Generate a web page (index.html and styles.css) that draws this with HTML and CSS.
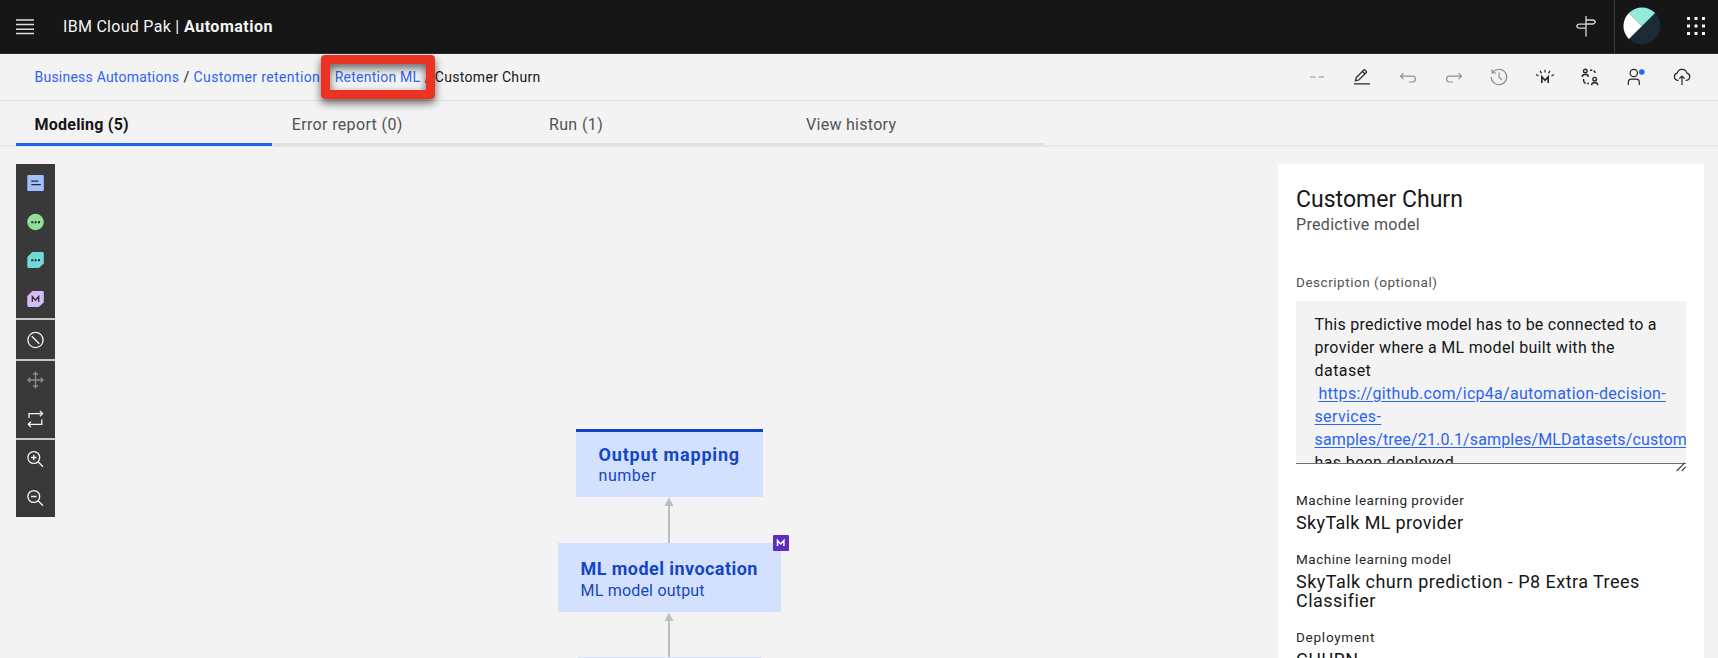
FILE: index.html
```html
<!DOCTYPE html>
<html lang="en">
<head>
<meta charset="utf-8">
<title>Customer Churn</title>
<link rel="stylesheet" href="styles.css">
</head>
<body>
<div class="app">
  <header class="header">
    <svg class="menu-icon" width="18" height="16" viewBox="0 0 18 16"><path d="M0 1h18M0 5.600h18M0 10.200h18M0 14.600h18" stroke="#e0e0e0" stroke-width="1.500"/></svg>
    <div class="brand"><span class="brand-name">IBM Cloud Pak |</span><b class="brand-product">Automation</b></div>
    <div class="header-actions">
      <svg class="sign-icon" width="22" height="24" viewBox="0 0 22 24" fill="none" stroke="#d8d8d8" stroke-width="1.300"><path d="M11 2v20.500M11 6h6.800q1.700 0 2.500 2-.8 2-2.500 2H11M11 10.200H4.200q-1.700 0-2.500 2 .8 2 2.500 2H11"/></svg>
      <span class="divider"></span>
      <svg class="avatar" width="38" height="38" viewBox="0 0 38 38"><circle cx="19" cy="19" r="18.500" fill="#1c2a35"/><path d="M19 19L5.900 5.900A18.500 18.500 0 0 1 32.100 5.900Z" fill="#92ebd9"/><path d="M19 19L5.900 5.900A18.500 18.500 0 0 0 5.900 32.100Z" fill="#fff"/></svg>
      <svg class="grid-icon" width="18" height="18" viewBox="0 0 18 18" fill="#f4f4f4"><path d="M0 0h3v3H0zM7.500 0h3v3h-3zM15 0h3v3h-3zM0 7.500h3v3H0zM7.500 7.500h3v3h-3zM15 7.500h3v3h-3zM0 15h3v3H0zM7.500 15h3v3h-3zM15 15h3v3h-3z"/></svg>
    </div>
  </header>

  <div class="crumb-bar">
    <nav class="crumbs">
      <a class="crumb-a">Business Automations</a><span class="slash">/</span><a class="crumb-b">Customer retention</a><span class="slash">/</span><a class="crumb-c crumb-marked">Retention ML<i class="marker"></i></a><span class="slash">/</span><span class="crumb-d">Customer Churn</span>
    </nav>
    <div class="tools">
      <svg class="dim" viewBox="0 0 18 18"><path d="M2 9h5.500M10.500 9H16"/></svg>
      <svg viewBox="0 0 18 18"><path d="M1 15.800h16M2.500 12.700l.8-3.200 7.500-7.500q.6-.6 1.200 0l1.300 1.300q.6.600 0 1.200L5.800 12zM9.500 3.500l2.500 2.500"/></svg>
      <svg class="dim" viewBox="0 0 18 18"><path d="M4.500 5.200L1.500 8.200l3 3M1.500 8.200h12a2.900 2.900 0 0 1 0 5.800H10"/></svg>
      <svg class="dim" viewBox="0 0 18 18"><path d="M13.500 5.200l3 3-3 3M16.500 8.200h-12a2.900 2.900 0 0 0 0 5.800H8"/></svg>
      <svg class="dim" viewBox="0 0 18 18"><path d="M1.300 9A7.700 7.700 0 1 0 3.400 3.700L2.200 5M2.200 1.200V5H6M9 4.500V9l3 3"/></svg>
      <svg viewBox="0 0 18 18"><path class="heavy" d="M5.800 15V8.700L9 12.200l3.200-3.500V15"/><path d="M9 1.800v2.700M4 2.800l1.500 2.600M14 2.800l-1.500 2.600M0 6.500l2.500 1.500M18 6.500l-2.500 1.500"/></svg>
      <svg class="people" viewBox="0 0 18 18"><circle cx="4.300" cy="3" r="1.800"/><path d="M1.300 9V8.700q0-2.200 2.200-2.200h1.600q2.200 0 2.200 2.200V9"/><circle cx="13.700" cy="11.200" r="1.800"/><path d="M10.700 17.200v-.3q0-2.200 2.200-2.200h1.600q2.200 0 2.200 2.200v.3M9 2.200h2.200M12.600 2.700q1.400.9 1.600 2.300M2.500 11q0 3.800 2.200 4.300M6.200 15.500H8"/></svg>
      <svg class="user-icon" viewBox="0 0 18 18"><circle cx="6.800" cy="5" r="3.700"/><path d="M1.300 17v-2.600q0-3.200 3.200-3.200h4.600q3.200 0 3.200 3.200V17"/><circle class="dot" cx="14.800" cy="4" r="2.800"/></svg>
      <svg viewBox="0 0 18 18"><path d="M5.500 12.300H4.700a3.600 3.600 0 0 1-.5-7.100 5 5 0 0 1 9.700 0 3.600 3.600 0 0 1-.5 7.100h-.8M9 17V8M6.300 10.700L9 8l2.700 2.700"/></svg>
    </div>
  </div>

  <nav class="tabs">
    <div class="tab tab-active"><span class="tab-a">Modeling (5)</span></div>
    <div class="tab"><span class="tab-b">Error report (0)</span></div>
    <div class="tab"><span class="tab-c">Run (1)</span></div>
    <div class="tab"><span class="tab-d">View history</span></div>
  </nav>

  <main class="workspace">
    <aside class="palette">
      <div class="group">
        <svg viewBox=".7 0 18 18"><rect x="1" y="1" width="16.500" height="16" rx="1" fill="#a0c0fb"/><path d="M5 7.200h7M5 10.700h9.500" stroke="#262626" stroke-width="1.200"/></svg>
        <svg viewBox=".7 0 18 18"><circle cx="9.200" cy="9" r="8.300" fill="#8fdf98"/><path d="M5 8.200h2v2H5zM8.300 8.200h2v2h-2zM11.700 8.200h2v2h-2z" fill="#262626"/></svg>
        <svg viewBox=".7 0 18 18"><path d="M6 1h10.500l1 1v10.500L12.500 17H2l-1-1V6z" fill="#70dadb"/><path d="M5 8.200h2v2H5zM8.300 8.200h2v2h-2zM11.700 8.200h2v2h-2z" fill="#262626"/></svg>
        <svg viewBox=".7 0 18 18"><path d="M6 1h10.500l1 1v10.500L12.500 17H2l-1-1V6z" fill="#d2bdf8"/><path d="M6 12V6.500l3.200 3.700 3.200-3.700V12" fill="none" stroke="#303030" stroke-width="1.300"/></svg>
      </div>
      <div class="group">
        <svg viewBox=".7 0 18 18" class="line"><circle cx="9.200" cy="9" r="7.600"/><path d="M5.500 5.300l7.500 7.500"/></svg>
      </div>
      <div class="group">
        <svg viewBox=".7 0 18 18" class="line faded"><path d="M9.200 1.500v15M1.700 9h15M6.900 3.800l2.300-2.300 2.300 2.300M6.900 14.200l2.300 2.300 2.300-2.300M4 6.700L1.700 9 4 11.300M14.400 6.700L16.700 9l-2.300 2.300"/></svg>
        <svg viewBox=".7 0 18 18" class="line"><path d="M2.700 8V3.600h13.500M13.600 1l2.700 2.600-2.700 2.600M15.500 9.500v4.800H2M4.600 11.700L2 14.300 4.600 17"/></svg>
      </div>
      <div class="group">
        <svg viewBox=".7 0 18 18" class="line"><circle cx="7.500" cy="7.500" r="5.900"/><path d="M11.800 11.800l4.900 4.900M7.500 4.700v5.600M4.700 7.500h5.600"/></svg>
        <svg viewBox=".7 0 18 18" class="line"><circle cx="7.500" cy="7.500" r="5.900"/><path d="M11.800 11.800l4.900 4.900M4.700 7.500h5.600"/></svg>
      </div>
    </aside>

    <section class="diagram">
      <div class="node node-output">
        <div class="node-title"><span class="node-a">Output mapping</span></div>
        <div class="node-sub"><span class="node-b">number</span></div>
      </div>
      <svg class="arrow" width="10" height="46" viewBox="0 0 10 46"><path d="M5 8v38" stroke="#b7c1bf" stroke-width="2"/><path d="M5 .5L9.500 9h-9z" fill="#b7c1bf"/></svg>
      <div class="node node-ml">
        <div class="node-title"><span class="node-c">ML model invocation</span></div>
        <div class="node-sub"><span class="node-d">ML model output</span></div>
        <svg class="badge" width="16" height="16" viewBox="0 0 16 16"><rect width="16" height="16" rx="1" fill="#5e2fbe"/><path d="M4.500 11V5.500L7.700 9l3.200-3.500V11" fill="none" stroke="#fff" stroke-width="1.500"/></svg>
      </div>
      <svg class="arrow" width="10" height="45" viewBox="0 0 10 45"><path d="M5 8v37" stroke="#b7c1bf" stroke-width="2"/><path d="M5 .5L9.500 9h-9z" fill="#b7c1bf"/></svg>
      <div class="node node-input"></div>
    </section>

    <aside class="panel">
      <h1 class="panel-title">Customer Churn</h1>
      <div class="panel-kind">Predictive model</div>
      <div class="label desc-label">Description (optional)</div>
      <div class="desc-wrap">
        <div class="desc">
          <div class="desc-a">This predictive model has to be connected to a</div>
          <div class="desc-b">provider where a ML model built with the</div>
          <div class="desc-c">dataset</div>
          <div class="desc-indent"><a class="desc-d">https://github.com/icp4a/automation-decision-</a></div>
          <div><a class="desc-e">services-</a></div>
          <div><a class="desc-f">samples/tree/21.0.1/samples/MLDatasets/custom</a></div>
          <div class="desc-g">has been deployed</div>
        </div>
        <svg class="grip" width="10" height="10" viewBox="0 0 10 10"><path d="M.7 9L8.500 1M5.700 9L9.500 5" stroke="#444" stroke-width="1.100"/></svg>
      </div>
      <div class="field">
        <div class="label">Machine learning provider</div>
        <div class="value">SkyTalk ML provider</div>
      </div>
      <div class="field">
        <div class="label">Machine learning model</div>
        <div class="value value-long">SkyTalk churn prediction - P8 Extra Trees<br>Classifier</div>
      </div>
      <div class="field">
        <div class="label label-deploy">Deployment</div>
        <div class="value value-deploy">CHURN</div>
      </div>
    </aside>
  </main>
</div>
</body>
</html>
```
FILE: styles.css
```css
* { box-sizing: border-box; }
body { margin: 0; font-family: Roboto, "Open Sans", sans-serif; color: #161616; background: #f3f3f3; }
.app { width: 1718px; height: 658px; overflow: hidden; display: flex; flex-direction: column; background: #f3f3f3; white-space: nowrap; }
svg { display: block; flex: none; }

.header { height: 54px; flex: none; display: flex; align-items: center; background: #161616; color: #f4f4f4; padding-left: 16px; border-bottom: 1px solid #2c2c2c; }
.brand { display: flex; gap: 4.500px; margin-left: 29px; font-size: 16px; }
.brand-name { letter-spacing: .287px; }
.brand-product { letter-spacing: .5px; }
.header-actions { margin-left: auto; display: flex; align-items: center; height: 100%; }
.sign-icon { margin-right: 17px; }
.divider { width: 1px; height: 100%; background: #393939; }
.avatar { margin: 0 26px 0 8px; }
.grid-icon { margin-right: 13.500px; }
.header-actions svg { margin-bottom: 1px; }

.crumb-bar { height: 47px; flex: none; display: flex; align-items: center; justify-content: space-between; border-bottom: 1px solid #dedede; padding: 0 27.500px 0 34.500px; }
.crumbs { display: flex; margin-top: -1px; font-size: 14px; line-height: 18px; }
.crumbs a { color: #2b64f0; }
.crumb-a { letter-spacing: .22px; }
.crumb-b { letter-spacing: .37px; }
.crumb-c { letter-spacing: .25px; }
.crumb-d { letter-spacing: .3px; }
.slash { width: 14.500px; text-align: center; }
.crumb-marked { position: relative; }
.marker { position: absolute; left: -14px; top: -13px; width: 114px; height: 44px; border: 9px solid #ec3323; border-radius: 4px; box-shadow: 0 4px 8px rgba(0,0,0,.6), inset 0 4px 8px rgba(0,0,0,.6); }
.tools { display: flex; gap: 27.600px; }
.tools svg { width: 18px; height: 18px; fill: none; stroke: #262626; stroke-width: 1.200; overflow: visible; }
.tools .dim { stroke: #8f8f8f; }
.tools .people { stroke-width: 1.400; }
.tools .heavy { stroke-width: 1.600; }
.tools .dot { fill: #2464fa; stroke: none; }

.tabs { height: 46px; flex: none; display: flex; gap: 1px; padding-left: 16px; border-bottom: 2px solid #e8e8e8; }
.tab { width: 256.200px; height: 45px; padding-left: 18.500px; line-height: 47px; font-size: 16px; color: #525252; border-bottom: 3px solid #e0e0e0; }
.tab-active { color: #161616; font-weight: 700; border-color: #1f62f5; }
.tab-a { letter-spacing: .235px; }
.tab-b { letter-spacing: .36px; }
.tab-c { letter-spacing: .4px; }
.tab-d { letter-spacing: .28px; }

.workspace { flex: 1; min-height: 0; display: flex; align-items: flex-start; padding: 17px 14px 0 16px; }
.palette { width: 39px; display: flex; flex-direction: column; gap: 2px; background: #c6c6c6; }
.group { background: #393939; display: flex; flex-direction: column; align-items: center; }
.group svg { width: 18px; height: 18px; margin: 10.300px 0; }
.line { fill: none; stroke: #f4f4f4; stroke-width: 1.300; }
.faded { stroke: #8d8d8d; }

.diagram { flex: 1; min-width: 0; display: flex; flex-direction: column; align-items: center; padding: 265px 0 0 5px; }
.node { flex: none; height: 69px; background: #d3e1fe; color: #1546c4; padding: 14px 0 0 23px; position: relative; }
.node-output { width: 187px; height: 68px; border-top: 3px solid #0f43bf; padding-top: 11px; }
.node-ml { width: 223px; }
.node-input { width: 183px; }
.node-title { font-size: 18px; font-weight: 700; line-height: 24px; }
.node-sub { font-size: 16px; line-height: 19px; }
.node-output .node-sub { line-height: 18px; }
.node-a { letter-spacing: .82px; }
.node-b { letter-spacing: .55px; }
.node-c { letter-spacing: .44px; }
.node-d { letter-spacing: .2px; }
.badge { position: absolute; right: -8px; top: -8px; }

.panel { width: 426px; height: 520px; flex: none; background: #fff; padding: 22px 18px 0 18px; }
.panel-title { margin: 0; font-size: 23px; font-weight: 400; line-height: 28px; letter-spacing: .02px; }
.panel-kind { font-size: 16px; line-height: 24px; letter-spacing: .32px; color: #525252; margin-top: -1px; }
.label { font-size: 13.500px; line-height: 18px; letter-spacing: .53px; color: #262626; }
.label-deploy { letter-spacing: .75px; }
.desc-label { margin-top: 36px; color: #525252; }
.desc-wrap { position: relative; margin-top: 9.500px; margin-bottom: 27px; }
.desc { height: 163px; background: #f3f3f3; border-bottom: 1px solid #6f6f6f; padding: 13.500px 0 0 18.500px; overflow: hidden; font-size: 16px; line-height: 22.950px; }
.desc a { color: #2b64f0; text-decoration: underline; text-underline-offset: 2px; }
.desc-a { letter-spacing: .24px; }
.desc-b { letter-spacing: .31px; }
.desc-c { letter-spacing: .45px; }
.desc-d { letter-spacing: .28px; }
.desc-e { letter-spacing: .36px; }
.desc-f { letter-spacing: .15px; }
.desc-g { letter-spacing: .4px; }
.desc-indent { padding-left: 4px; }
.grip { position: absolute; right: 0; bottom: -8px; }
.field { margin-bottom: 18.200px; }
.value { margin-top: 5.200px; font-size: 18px; line-height: 18.300px; letter-spacing: .35px; }
.value-long { letter-spacing: .47px; }
.value-deploy { letter-spacing: .5px; }
```
